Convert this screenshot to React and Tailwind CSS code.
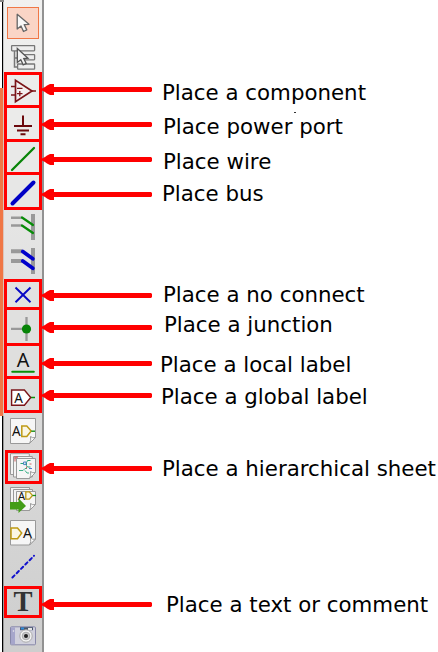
import React from 'react';

// Every icon shares the toolbar's x range (7..39); y is the toolbar's own vertical position.
const Icon = ({ y, h, children }) => (
  <svg width="32" height={h} viewBox={`7 ${y} 32 ${h}`} className="block shrink-0 overflow-visible" fill="none">
    {children}
  </svg>
);

const Letter = ({ x, y, size, children, w }) => (
  <text x={x} y={y} fontSize={size} textLength={w} lengthAdjust="spacingAndGlyphs" fill="#111" className="font-['Noto_Sans',sans-serif]">
    {children}
  </text>
);

const Page = ({ x, y, w, h }) => (
  <g stroke="#999" strokeWidth="1">
    <path d={`M${x} ${y}h${w}v${h - 6}l-6 6h-${w - 6}z`} fill="#f6f6f6" />
    <path d={`M${x + w} ${y + h - 6}q-3 1-5-1q1 4-1 7z`} fill="#fff" />
  </g>
);

const Cursor = () => (
  <Icon y={7} h={32}>
    <path d="M17.2 14.3V29l3.8-3 2.5 5.5 3.3-1.6-2.6-5.3 4.8-.3z" fill="#f8f8f8" stroke="#666" strokeWidth="1.3" strokeLinejoin="round" />
  </Icon>
);

const Hierarchy = () => (
  <Icon y={40} h={32}>
    <path d="M14.5 51v16H18M14.5 58H18" stroke="#777" strokeWidth="1.5" />
    <g fill="#eee" stroke="#777" strokeWidth="1.3">
      <rect x="11.6" y="45.6" width="23" height="5.2" rx=".5" />
      <rect x="17.6" y="54.6" width="17" height="5.2" rx=".5" />
      <rect x="17.6" y="64" width="17" height="5.2" rx=".5" />
    </g>
    <path d="M17.3 48.5V62.5l3.5-2.7 2.4 5 3-1.4-2.4-4.8 4.2-.4z" fill="#f3f3f3" stroke="#555" strokeWidth="1.3" />
  </Icon>
);

const Component = () => (
  <Icon y={75} h={30}>
    <path d="M11 86.5h4M11 95h4M32 91h4" stroke="#7b1418" strokeWidth="1.5" />
    <path d="M15.5 80.3v21.4L32 91z" stroke="#7b1418" strokeWidth="1.7" fill="#f4f0f0" />
    <path d="M17 88.3h5.5M17 93.6h5.5M19.8 91v5.2" stroke="#7b1418" strokeWidth="1.3" />
  </Icon>
);

const Power = () => (
  <Icon y={108} h={31}>
    <path d="M23 115.5V126M14 126h18M17 130.5h12M20.5 134.3h5" stroke="#6b080c" strokeWidth="2" />
  </Icon>
);

const Wire = () => (
  <Icon y={142} h={30}>
    <path d="M12 170L34 148" stroke="#078407" strokeWidth="2.3" strokeLinecap="round" />
  </Icon>
);

const Bus = () => (
  <Icon y={175} h={32}>
    <path d="M12.5 203.5L33.5 182.5" stroke="#0000c5" strokeWidth="4" strokeLinecap="round" />
  </Icon>
);

const WireEntry = () => (
  <Icon y={210} h={35}>
    <path d="M11 217.7h11M11 225.6h11" stroke="#999" strokeWidth="2.5" />
    <path d="M33 214v26" stroke="#999" strokeWidth="4" />
    <path d="M22 217.5l11 7.5M22 225.5l11 7.5" stroke="#078c07" strokeWidth="2.2" strokeLinecap="round" />
  </Icon>
);

const BusEntry = () => (
  <Icon y={245} h={34}>
    <path d="M11 251.3h11M11 261h11" stroke="#999" strokeWidth="4" />
    <path d="M33 248v26" stroke="#999" strokeWidth="4" />
    <path d="M22.8 251.5l10 7.3M22.8 261l10 7.3" stroke="#0000cc" strokeWidth="3.8" strokeLinecap="round" />
  </Icon>
);

const NoConnect = () => (
  <Icon y={282} h={25}>
    <path d="M15.5 287.5l15 14.8M30.5 287.5l-15 14.8" stroke="#0808c5" strokeWidth="1.9" />
  </Icon>
);

const Junction = () => (
  <Icon y={310} h={33}>
    <path d="M11 328.8h15M26.5 317v24" stroke="#999" strokeWidth="2.3" />
    <circle cx="26.5" cy="329" r="4.6" fill="#078407" />
  </Icon>
);

const LocalLabel = () => (
  <Icon y={346} h={30}>
    <Letter x="16.7" y="367" size="19.6" w="12.6">A</Letter>
    <path d="M12.3 371.7h21.5" stroke="#079007" strokeWidth="2.1" strokeLinecap="round" />
  </Icon>
);

const GlobalLabel = () => (
  <Icon y={379} h={31}>
    <path d="M30.5 397.5H35" stroke="#079007" strokeWidth="1.5" />
    <path d="M11.6 390h12.8l6.3 7.5-6.3 7.7H11.6z" fill="#fff" stroke="#7b1418" strokeWidth="1.4" />
    <Letter x="14.3" y="402.8" size="14.5" w="8.6">A</Letter>
  </Icon>
);

const HierLabel = () => (
  <Icon y={413} h={37}>
    <Page x={10.5} y={418.5} w={25} h={25} />
    <Letter x="12" y="436" size="14" w="8.6">A</Letter>
    <path d="M21.8 426h5l4.4 5-4.4 5.5h-5z" fill="#faf7e5" stroke="#be9a15" strokeWidth="1.5" />
    <path d="M31.3 431.2H35" stroke="#179017" strokeWidth="1.4" />
  </Icon>
);

const Sheet = () => (
  <Icon y={453} h={28}>
    <path d="M10.5 474.5v-20.8h18.8v20.8z" fill="#f4f4f4" stroke="#999" />
    <path d="M13.5 477v-20.5h18.8V477z" fill="#f4f4f4" stroke="#999" />
    <path d="M15 456.5v5M17 456v4M14.5 458h3" stroke="#c55" />
    <Page x={16.5} y={458.5} w={19} h={20} />
    <path d="M20.5 463.5h3M30.5 460.5h-3l-1 2v3l1 1.5h3" stroke="#2aa77a" strokeWidth="1" />
    <path d="M23.6 462h2.4v2.6h-2.4z" stroke="#3976bd" strokeWidth=".9" />
    <path d="M19 470.5h4l2-2h2M25 470.5l2 2.5h2" stroke="#29a87d" strokeWidth=".9" />
    <path d="M29 468.5h3" stroke="#57c" />
    <path d="M26.5 466.5v2M29.5 464h2" stroke="#c55" strokeWidth=".9" />
  </Icon>
);

const ImportLabel = () => (
  <Icon y={484} h={34}>
    <path d="M10.5 487.5h19v17h-19z" fill="#f4f4f4" stroke="#999" />
    <path d="M13.5 489.5h19v17h-19z" fill="#f4f4f4" stroke="#999" />
    <Page x={16.5} y={491.5} w={19} h={19} />
    <Letter x="18.1" y="499.8" size="11.5" w="7.1">A</Letter>
    <path d="M25.8 491.8h3.5l3.2 3.6-3.2 3.7h-3.5z" fill="#fbf7e7" stroke="#be9a15" strokeWidth="1.3" />
    <path d="M32.6 495.5H36" stroke="#179017" strokeWidth="1.3" />
    <path d="M10 502h8.5v-3.8L26 506l-7.5 7v-3.5H10z" fill="#439d18" />
  </Icon>
);

const SheetPin = () => (
  <Icon y={518} h={34}>
    <Page x={10.5} y={520.5} w={25} h={24.5} />
    <path d="M11 528h6.5l4.2 5-4.2 5.8H11z" fill="#faf7e5" stroke="#be9a15" strokeWidth="1.5" />
    <Letter x="23" y="538" size="14.5" w="9">A</Letter>
  </Icon>
);

const DashedLine = () => (
  <Icon y={552} h={34}>
    <path d="M12.4 577.5L34 555.8" stroke="#1010cd" strokeWidth="2" strokeDasharray="3 3.1" strokeLinecap="round" />
  </Icon>
);

const TextTool = () => (
  <Icon y={589} h={26}>
    <text x="13.5" y="611" fontSize="29" fontWeight="bold" textLength="19" lengthAdjust="spacingAndGlyphs" fill="#333" className="font-['Liberation_Serif',serif]">T</text>
  </Icon>
);

const Camera = () => (
  <Icon y={618} h={34}>
    <rect x="10.5" y="626.8" width="25" height="18" rx="1" fill="#d0d0dc" stroke="#8888aa" />
    <path d="M11 627.3h4v17h-4z" fill="#a6a6cb" />
    <path d="M20 627.2h13v3H20z" fill="#46556b" />
    <path d="M21 627.5h3v2h-3z" fill="#2d8cdf" />
    <path d="M28 628h4v2h-4z" fill="#e6e6e6" />
    <circle cx="26" cy="636" r="6.2" fill="#f3f3f3" stroke="#aaa" />
    <circle cx="26" cy="636" r="3.8" fill="#ccc" stroke="#aaa" />
    <circle cx="26" cy="636" r="2" fill="#222" />
    <circle cx="13.5" cy="631" r=".8" fill="#eee" />
  </Icon>
);

const Arrow = ({ gap }) => (
  <svg width="110" height="11" viewBox="0 0 110 11" className={`block shrink-0 ${gap}`}>
    <path d="M0 4.5L3 3L5 1.5L8 0H12V3H109L110 4V7L109 8H12V11H8L5 9.5L3 8L0 6.5Z" fill="#f00" />
  </svg>
);

const labels = [
  ['mt-[81px] ml-[10px]', 'Place a component'],
  ['mt-[10px] ml-[11px]', 'Place power port'],
  ['mt-[11px] ml-[11px]', 'Place wire'],
  ['mt-[8px] ml-[10px]', 'Place bus'],
  ['mt-[77px] ml-[11px]', 'Place a no connect'],
  ['mt-[6px] ml-[12px]', 'Place a junction'],
  ['mt-[16px] ml-[8px]', 'Place a local label'],
  ['mt-[8px] ml-[9px]', 'Place a global label'],
  ['mt-[48px] ml-[10px]', 'Place a hierarchical sheet'],
  ['mt-[112px] ml-[14px]', 'Place a text or comment'],
];

const arrowGaps = [
  'mt-[84px]', 'mt-[24px]', 'mt-[24px]', 'mt-[24px]', 'mt-[90px]',
  'mt-[21px]', 'mt-[25px]', 'mt-[21px]', 'mt-[62px]', 'mt-[125px]',
];

export default function App() {
  return (
    <div className="relative flex h-[652px] w-[438px] overflow-hidden bg-white">
      <div className="flex w-[4px] shrink-0 flex-col">
        <div className="h-[2px] bg-[#888]" />
        <div className="h-[86px] border-r border-[#c8c8c8] pl-[2px]"><div className="h-full w-px bg-black" /></div>
        <div className="h-[328px] border-r border-[#dcc5bb] bg-[#f07746]" />
        <div className="flex-1 border-r border-[#999] pl-[2px]"><div className="h-full w-px bg-black" /></div>
      </div>
      <div className="flex w-[40px] shrink-0 flex-col border-r-2 border-[#929292] bg-linear-to-b from-[#f1f1f0] to-[#cecece]">
        <div className="h-[39px] pt-[7px] pl-[3px]">
          <div className="w-[32px] bg-[#fad5c6] outline-1 -outline-offset-1 outline-[#f07746]"><Cursor /></div>
        </div>
        <div className="mt-px h-[32px] pl-[3px]"><Hierarchy /></div>
        <div className="flex h-[138px] w-[38px] shrink-0 flex-col gap-[3px] bg-[#f00] p-[3px]">
          <div className="bg-[#ececeb]"><Component /></div>
          <div className="bg-[#ebebea]"><Power /></div>
          <div className="bg-[#e9e9e8]"><Wire /></div>
          <div className="bg-[#e7e7e6]"><Bus /></div>
        </div>
        <div className="pl-[3px]"><WireEntry /></div>
        <div className="pl-[3px]"><BusEntry /></div>
        <div className="flex h-[134px] w-[38px] shrink-0 flex-col gap-[3px] bg-[#f00] p-[3px]">
          <div className="bg-[#e2e2e1]"><NoConnect /></div>
          <div className="bg-[#e0e0df]"><Junction /></div>
          <div className="bg-[#dfdfde]"><LocalLabel /></div>
          <div className="bg-[#dededd]"><GlobalLabel /></div>
        </div>
        <div className="pl-[3px]"><HierLabel /></div>
        <div className="ml-px h-[34px] w-[37px] overflow-hidden border-3 border-[#f00] bg-[#dadad9]">
          <div className="-ml-px"><Sheet /></div>
        </div>
        <div className="pl-[3px]"><ImportLabel /></div>
        <div className="pl-[3px]"><SheetPin /></div>
        <div className="pl-[3px]"><DashedLine /></div>
        <div className="h-[32px] w-[38px] border-3 border-[#f00]"><TextTool /></div>
        <div className="pl-[3px]"><Camera /></div>
      </div>
      <div className="z-10 -ml-[2px] flex w-[110px] shrink-0 flex-col">
        {arrowGaps.map((gap, i) => <Arrow key={i} gap={gap} />)}
      </div>
      <div className="flex shrink-0 flex-col font-['DejaVu_Sans',sans-serif] text-[21.33px] leading-[24px] text-black">
        {labels.map(([place, text]) => (
          <div key={text} className={`h-[24px] whitespace-nowrap ${place}`}>{text}</div>
        ))}
      </div>
      <div className="absolute top-[112px] left-[294px] h-px w-[2px] bg-[#333]" />
    </div>
  );
}
